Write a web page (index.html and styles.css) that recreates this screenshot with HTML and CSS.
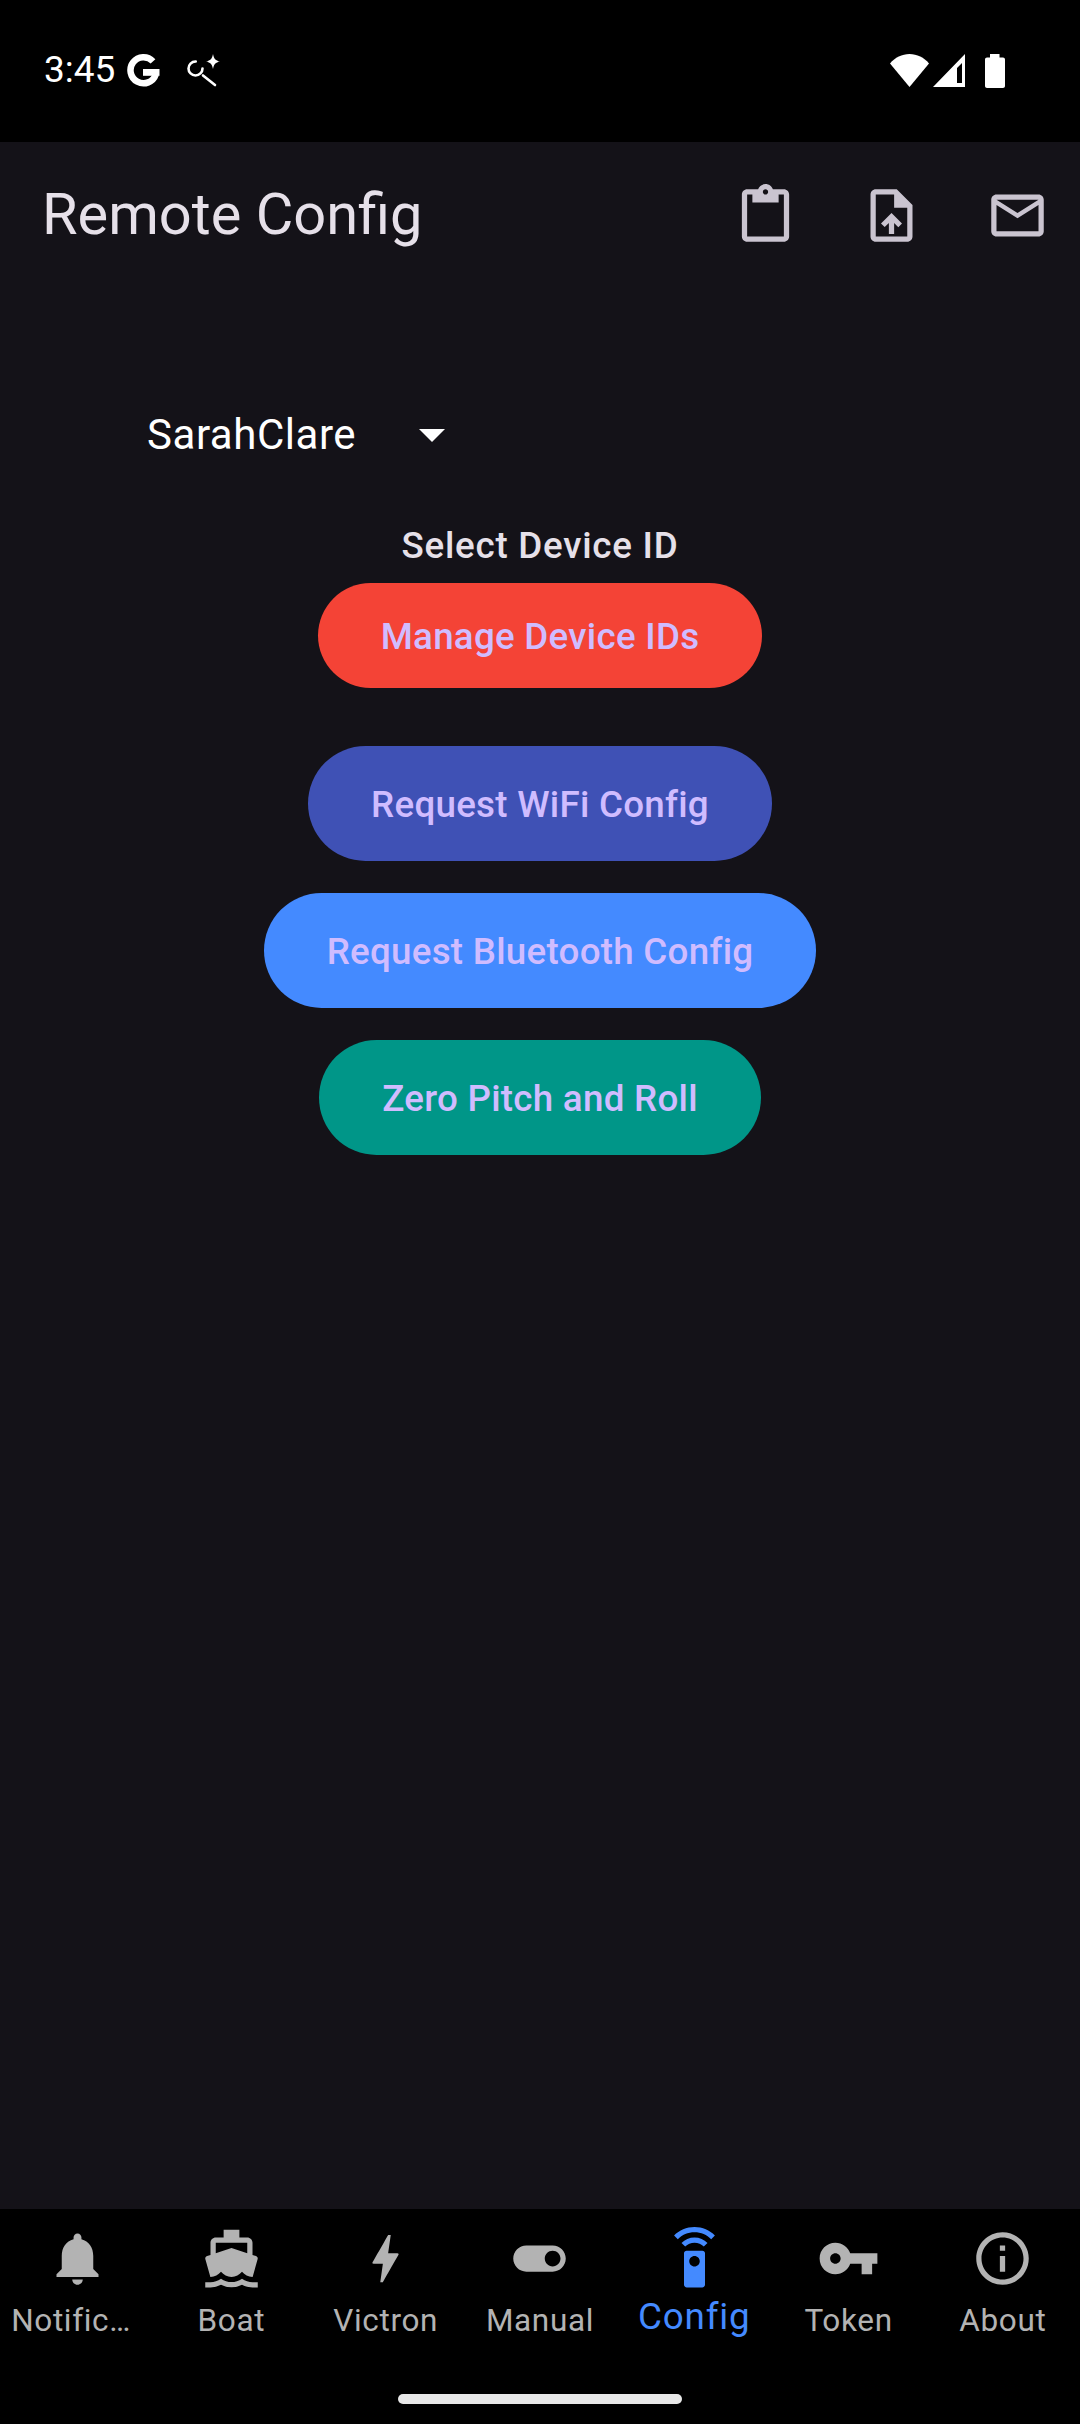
FILE: index.html
```html
<!DOCTYPE html>
<html lang="en">
<head>
<meta charset="utf-8">
<title>Remote Config</title>
<link rel="stylesheet" href="styles.css">
</head>
<body>
<div class="screen">
  <div class="status">
    <div class="status-left">
      <span class="time">3:45</span>
      <svg class="g-logo" viewBox="0 0 33 33"><path class="g-arc" d="M26 7.400A13 13 0 1 0 28.800 20.500"/><rect x="16" y="15" width="16.500" height="6.800"/></svg>
      <svg class="spark" viewBox="0 0 33 33"><circle cx="8.500" cy="14.500" r="7" class="spark-line" stroke-dasharray="33 11"/><path d="M16 21.500l12 9.500" class="spark-line"/><path d="M26 0c.8 4.500 2.600 6.700 7 7.500-4.400.8-6.200 3-7 7.500-.8-4.500-2.600-6.700-7-7.500 4.400-.8 6.200-3 7-7.500z"/></svg>
    </div>
    <div class="status-right">
      <svg class="wifi" viewBox="0 0 39 33"><path d="M19.500 33L0 9.500C5 3.500 12 0 19.500 0S34 3.500 39 9.500z"/></svg>
      <svg class="signal" viewBox="0 0 32 33"><path fill-rule="evenodd" d="M32 0v33H0zM29 9l-5 5v15h5z"/></svg>
      <svg class="battery" viewBox="0 0 20 34"><path d="M5 0h9.500v3.500H18c1.100 0 2 .9 2 2V32c0 1.100-.9 2-2 2H2c-1.100 0-2-.9-2-2V5.500c0-1.100.9-2 2-2h3z"/></svg>
    </div>
  </div>

  <header class="appbar">
    <h1 class="title">Remote Config</h1>
    <div class="actions">
      <button class="action"><svg viewBox="0 0 24 24"><path d="M19 2h-4.180C14.400.84 13.300 0 12 0c-1.300 0-2.400.84-2.820 2H5c-1.100 0-2 .9-2 2v16c0 1.100.9 2 2 2h14c1.100 0 2-.9 2-2V4c0-1.100-.9-2-2-2zm-7 0c.55 0 1 .45 1 1s-.45 1-1 1-1-.45-1-1 .45-1 1-1zm7 18H5V4h2v3h10V4h2v16z"/></svg></button>
      <button class="action"><svg viewBox="0 0 24 24"><path d="M14 2H6c-1.100 0-1.990.9-1.990 2L4 20c0 1.100.89 2 1.990 2H18c1.100 0 2-.9 2-2V8l-6-6zm4 18H6V4h7v5h5v11zM8 15.010l1.410 1.410L11 14.840V19h2v-4.160l1.590 1.590L16 15.010 12.010 11 8 15.010z"/></svg></button>
      <button class="action"><svg viewBox="0 0 24 24"><path d="M22 6c0-1.100-.9-2-2-2H4c-1.100 0-2 .9-2 2v12c0 1.100.9 2 2 2h16c1.100 0 2-.9 2-2V6zm-2 0l-8 5-8-5h16zm0 12H4V8l8 5 8-5v10z"/></svg></button>
    </div>
  </header>

  <main class="content">
    <div class="dropdown">
      <span class="dropdown-value">SarahClare</span>
      <span class="dropdown-arrow"></span>
    </div>
    <div class="label">Select Device ID</div>
    <button class="pill pill-red">Manage Device IDs</button>
    <button class="pill pill-tall pill-indigo">Request WiFi Config</button>
    <button class="pill pill-tall pill-blue">Request Bluetooth Config</button>
    <button class="pill pill-tall pill-teal">Zero Pitch and Roll</button>
  </main>

  <nav class="nav">
    <div class="tabs">
      <div class="tab"><svg viewBox="0 0 24 24"><path d="M12 22c1.100 0 2-.9 2-2h-4c0 1.100.89 2 2 2zm6-6v-5c0-3.070-1.640-5.640-4.500-6.320V4c0-.83-.67-1.500-1.500-1.500s-1.500.67-1.500 1.500v.68C7.630 5.360 6 7.920 6 11v5l-2 2v1h16v-1l-2-2z"/></svg><span class="tab-label tab-label-clipped">Notific…</span></div>
      <div class="tab"><svg viewBox="0 0 24 24"><path d="M20 21c-1.390 0-2.780-.47-4-1.320-2.440 1.710-5.560 1.710-8 0C6.780 20.530 5.390 21 4 21H2v2h2c1.380 0 2.740-.35 4-.99 2.520 1.290 5.480 1.290 8 0 1.260.65 2.620.99 4 .99h2v-2h-2zM3.950 19H4c1.600 0 3.020-.88 4-2 .98 1.120 2.400 2 4 2s3.020-.88 4-2c.98 1.120 2.400 2 4 2h.05l1.890-6.680c.08-.26.06-.54-.06-.78s-.34-.42-.6-.5L20 10.620V6c0-1.100-.9-2-2-2h-3V1H9v3H6c-1.100 0-2 .9-2 2v4.620l-1.290.42c-.26.08-.48.26-.6.5s-.15.52-.06.78L3.950 19zM6 6h12v3.970L12 8 6 9.970V6z"/></svg><span class="tab-label">Boat</span></div>
      <div class="tab"><svg viewBox="0 0 24 24"><path d="M11 21h-1l1-7H7.500c-.58 0-.57-.32-.38-.66.19-.34.05-.08.07-.12C8.480 10.940 10.420 7.540 13 3h1l-1 7h3.500c.49 0 .56.33.47.51l-.07.15C12.960 17.550 11 21 11 21z"/></svg><span class="tab-label">Victron</span></div>
      <div class="tab"><svg viewBox="0 0 24 24"><path d="M17 7H7c-2.760 0-5 2.240-5 5s2.240 5 5 5h10c2.760 0 5-2.240 5-5s-2.240-5-5-5zm0 8c-1.660 0-3-1.340-3-3s1.340-3 3-3 3 1.340 3 3-1.340 3-3 3z"/></svg><span class="tab-label">Manual</span></div>
      <div class="tab tab-active"><svg viewBox="0 0 24 24"><path d="M15 9H9c-.55 0-1 .45-1 1v12c0 .55.45 1 1 1h6c.55 0 1-.45 1-1V10c0-.55-.45-1-1-1zm-3 6c-1.100 0-2-.9-2-2s.9-2 2-2 2 .9 2 2-.9 2-2 2zM7.050 6.050l1.410 1.410C9.370 6.560 10.620 6 12 6s2.630.56 3.540 1.460l1.410-1.410C15.680 4.780 13.930 4 12 4s-3.680.78-4.950 2.050zM12 0C8.960 0 6.210 1.230 4.220 3.220l1.410 1.410C7.260 3.010 9.510 2 12 2s4.740 1.010 6.360 2.640l1.410-1.410C17.790 1.230 15.040 0 12 0z"/></svg><span class="tab-label">Config</span></div>
      <div class="tab"><svg viewBox="0 0 24 24"><path d="M12.650 10C11.830 7.670 9.610 6 7 6c-3.310 0-6 2.690-6 6s2.690 6 6 6c2.610 0 4.830-1.670 5.650-4H17v4h4v-4h2v-4H12.650zM7 14c-1.100 0-2-.9-2-2s.9-2 2-2 2 .9 2 2-.9 2-2 2z"/></svg><span class="tab-label">Token</span></div>
      <div class="tab"><svg viewBox="0 0 24 24"><path d="M11 7h2v2h-2zm0 4h2v6h-2zm1-9C6.480 2 2 6.480 2 12s4.480 10 10 10 10-4.480 10-10S17.520 2 12 2zm0 18c-4.410 0-8-3.590-8-8s3.590-8 8-8 8 3.590 8 8-3.590 8-8 8z"/></svg><span class="tab-label">About</span></div>
    </div>
    <div class="home-indicator"></div>
  </nav>
</div>
</body>
</html>
```

FILE: styles.css
```css
* { box-sizing: border-box; }
html, body { margin: 0; padding: 0; background: #141218; }
body { font-family: Roboto, "Noto Sans", sans-serif; }

.screen { width: 1080px; height: 2424px; display: flex; flex-direction: column; overflow: hidden; }

.status { height: 142px; background: #000; display: flex; justify-content: space-between; align-items: flex-start; color: #fff; fill: #fff; padding: 53px 75px 0 44px; }
.status-left { display: flex; align-items: center; height: 34px; }
.time { font-size: 37px; line-height: 34px; letter-spacing: 0; width: 83px; font-weight: 400; }
.g-logo { width: 33px; height: 33px; }
.g-arc { fill: none; stroke: #fff; stroke-width: 6.5px; }
.spark { width: 33px; height: 33px; margin-left: 27px; }
.spark-line { fill: none; stroke: #fff; stroke-width: 2.6px; stroke-linecap: round; }
.status-right { display: flex; align-items: flex-start; }
.wifi { width: 39px; height: 33px; margin-top: 1px; }
.signal { width: 32px; height: 33px; margin: 1px 0 0 4px; }
.battery { width: 20px; height: 34px; margin: 1px 0 0 20px; }

.appbar { height: 147px; display: flex; align-items: center; justify-content: space-between; padding-left: 42px; }
.title { margin: 0 0 2px; font-size: 57.75px; font-weight: 400; color: #e6e0e9; line-height: 1; }
.actions { display: flex; }
.action { width: 126px; height: 126px; padding: 0; border: 0; background: none; display: flex; align-items: center; justify-content: center; fill: #cac4d0; }
.action svg { width: 63px; height: 63px; display: block; }

.content { flex: 1; display: flex; flex-direction: column; align-items: center; padding-top: 82px; }
.dropdown { align-self: flex-start; height: 126px; margin-left: 147px; display: flex; align-items: center; color: #fff; }
.dropdown-value { font-size: 42px; letter-spacing: .55px; width: 272px; }
.dropdown-arrow { width: 0; height: 0; border-left: 13px solid transparent; border-right: 13px solid transparent; border-top: 13px solid #fff; margin-top: 3px; }
.label { margin-top: 24px; height: 49px; line-height: 50px; font-size: 36.75px; font-weight: 500; letter-spacing: .75px; color: #e6e0e9; }
.pill { margin-top: 13px; height: 105px; border: 0; border-radius: 53px; padding: 2px 63px 0; font-family: inherit; font-size: 36.75px; font-weight: 500; letter-spacing: .26px; color: #d0bcff; }
.pill-tall { height: 115px; border-radius: 58px; margin-top: 32px; }
.pill-indigo { margin-top: 58px; background: #3f51b5; }
.pill-red { background: #f44336; }
.pill-blue { background: #448aff; }
.pill-teal { background: #009688; }

.nav { height: 215px; background: #000; display: flex; flex-direction: column; }
.tabs { display: grid; grid-template-columns: repeat(7, 1fr); padding-top: 18px; height: 185px; }
.tab { display: flex; flex-direction: column; align-items: center; fill: #b3b3b3; color: #b3b3b3; min-width: 0; }
.tab svg { width: 63px; height: 63px; display: block; flex: none; }
.tab-label { display: block; margin-top: 11.5px; font-size: 31.5px; line-height: 37px; letter-spacing: .65px; white-space: nowrap; }
.tab-label-clipped { width: 132px; text-align: left; }
.tab-active { fill: #448aff; color: #448aff; }
.tab-active .tab-label { font-size: 36.75px; line-height: 43px; margin-top: 5px; letter-spacing: .8px; }
.home-indicator { width: 284px; height: 10px; border-radius: 5px; background: #e8e8e8; margin: 0 auto; }
```
